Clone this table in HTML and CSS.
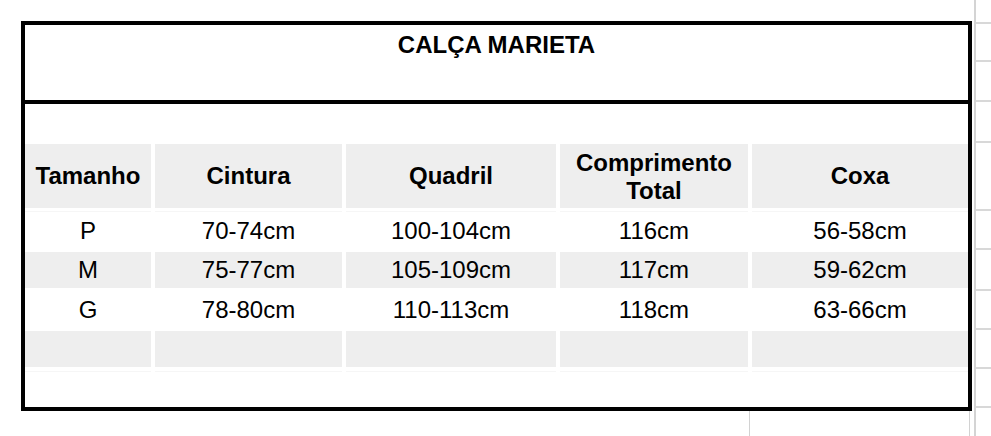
FILE: index.html
```html
<!DOCTYPE html>
<html lang="pt">
<head>
<meta charset="utf-8">
<title>Calça Marieta</title>
<link rel="stylesheet" href="styles.css">
</head>
<body>
<div class="page">
  <div class="main">
    <div class="box">
      <div class="title">CALÇA MARIETA</div>
      <div class="spacer"></div>
      <div class="grid">
        <div class="cell head">Tamanho</div>
        <div class="cell head">Cintura</div>
        <div class="cell head">Quadril</div>
        <div class="cell head two">Comprimento<br>Total</div>
        <div class="cell head">Coxa</div>

        <div class="cell first">P</div>
        <div class="cell first">70-74cm</div>
        <div class="cell first">100-104cm</div>
        <div class="cell first">116cm</div>
        <div class="cell first">56-58cm</div>

        <div class="cell gray">M</div>
        <div class="cell gray">75-77cm</div>
        <div class="cell gray">105-109cm</div>
        <div class="cell gray">117cm</div>
        <div class="cell gray">59-62cm</div>

        <div class="cell">G</div>
        <div class="cell">78-80cm</div>
        <div class="cell">110-113cm</div>
        <div class="cell">118cm</div>
        <div class="cell">63-66cm</div>

        <div class="cell gray"></div>
        <div class="cell gray"></div>
        <div class="cell gray"></div>
        <div class="cell gray"></div>
        <div class="cell gray"></div>

        <div class="cell last"></div>
        <div class="cell last"></div>
        <div class="cell last"></div>
        <div class="cell last"></div>
        <div class="cell last"></div>
      </div>
    </div>
    <div class="below">
      <div class="below-a"></div>
      <div class="below-b"></div>
    </div>
  </div>
  <div class="gutter">
    <div class="g g1"></div>
    <div class="g g2"></div>
    <div class="g g3"></div>
    <div class="g g4"></div>
    <div class="g g5"></div>
    <div class="g g6"></div>
    <div class="g g7"></div>
    <div class="g g8"></div>
    <div class="g g9"></div>
    <div class="g g10"></div>
  </div>
</div>
</body>
</html>
```

FILE: styles.css
```css
html, body {
  margin: 0;
  padding: 0;
  background: #ffffff;
}

body {
  font-family: "Liberation Sans", Arial, sans-serif;
  color: #000;
}

.page {
  display: flex;
  width: 991px;
  height: 436px;
  overflow: hidden;
}

.main {
  padding: 21px 0 0 21px;
  display: flex;
  flex-direction: column;
}

.box {
  width: 943px;
  height: 382px;
  border: 4px solid #000;
  display: flex;
  flex-direction: column;
}

.title {
  height: 69px;
  padding-top: 6px;
  border-bottom: 4px solid #000;
  text-align: center;
  font-weight: bold;
  font-size: 24px;
  line-height: 28px;
}

.spacer {
  height: 40px;
}

.grid {
  display: grid;
  grid-template-columns: 126px 187px 210px 188px 216px;
  grid-template-rows: 64px 44px 36px 43px 36px 40px;
  column-gap: 4px;
}

.cell {
  display: flex;
  align-items: center;
  justify-content: center;
  text-align: center;
  font-size: 24px;
  line-height: 28px;
}

.head {
  background: #eeeeee;
  font-weight: bold;
}

.head.two {
  line-height: 28px;
  padding-top: 2px;
}

.first {
  padding-top: 2px;
  box-shadow: inset 0 3px 0 #ffffff, inset 0 4px 0 #f6f6f6;
}

.gray {
  background: #eeeeee;
}

.last {
  box-shadow: inset 0 4px 0 #ffffff, inset 0 5px 0 #f6f6f6;
}

.below {
  display: flex;
  height: 25px;
}

.below-a {
  width: 728px;
  border-right: 1px solid #d2d2d2;
}

.below-b {
  width: 219px;
  border-right: 1px solid #d2d2d2;
}

.gutter {
  margin-left: 2px;
  border-left: 2px solid #d4d4d4;
  flex: 1;
  display: flex;
  flex-direction: column;
}

.g {
  border-bottom: 2px solid #d8d8d8;
  flex: none;
}

.g1 { height: 22px; }
.g2 { height: 36px; }
.g3 { height: 38px; }
.g4 { height: 39px; }
.g5 { height: 66px; }
.g6 { height: 37px; }
.g7 { height: 39px; }
.g8 { height: 37px; }
.g9 { height: 37px; }
.g10 { height: 37px; }
```
